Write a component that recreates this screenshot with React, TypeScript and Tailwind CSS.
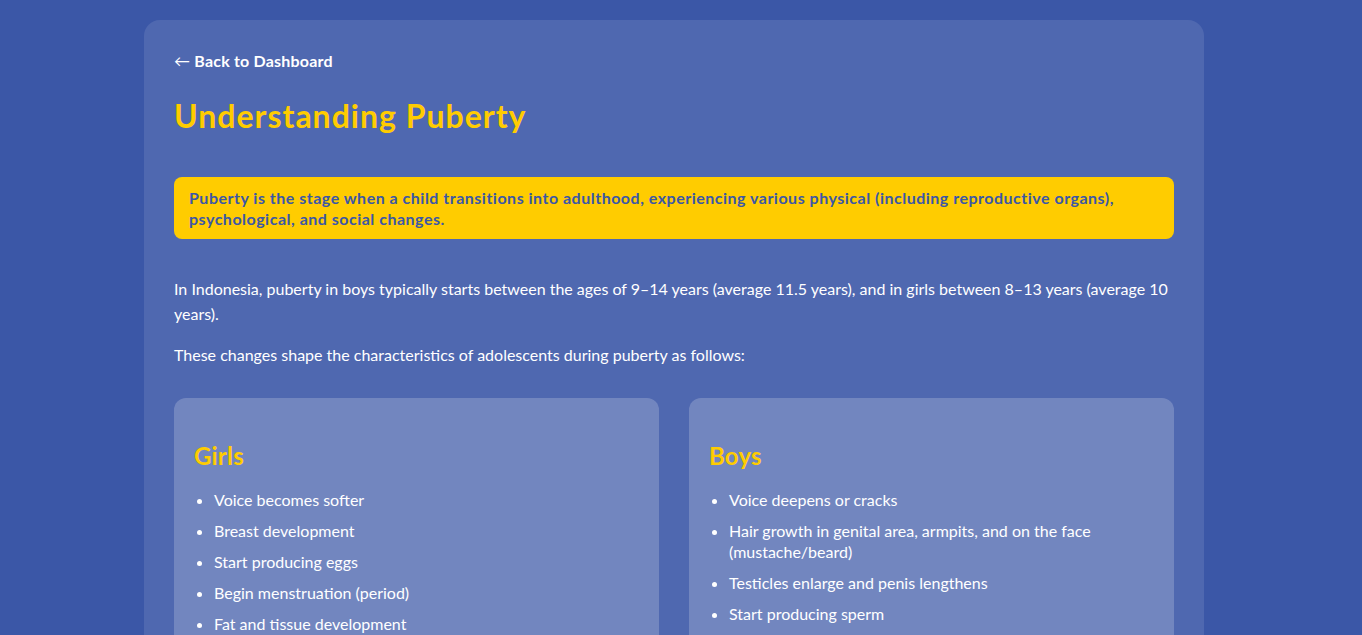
import React from 'react';

const girls = [
  'Voice becomes softer',
  'Breast development',
  'Start producing eggs',
  'Begin menstruation (period)',
  'Fat and tissue development',
  'Hips widen',
  'Hair growth in genital area and armpits',
];

const boys = [
  'Voice deepens or cracks',
  'Hair growth in genital area, armpits, and on the face (mustache/beard)',
  'Testicles enlarge and penis lengthens',
  'Start producing sperm',
  'Wet dreams',
  'Shoulders and chest widen',
];

const TraitCard: React.FC<{ title: string; items: string[] }> = ({ title, items }) => (
  <div className="rounded-xl bg-white/20 px-5 pt-[42px] pb-6">
    <h3 className="mb-[17px] text-2xl font-bold leading-[32px] tracking-[0.2px] text-[#ffcc00]">{title}</h3>
    <ul className="list-disc space-y-[10px] pl-5 text-base leading-[21px] text-white marker:text-white">
      {items.map((item) => (
        <li key={item}>{item}</li>
      ))}
    </ul>
  </div>
);

const App: React.FC = () => {
  return (
    <div className="min-h-screen bg-[#3b57a7] pr-[15px] font-['Lato','Noto_Sans',sans-serif]">
      <div className="p-5 pl-[21px]">
        <div className="mx-auto max-w-[1060px] rounded-2xl bg-white/10 px-[30px] pt-[30px] pb-10">
          <a href="#" className="block text-base font-bold leading-[22px] tracking-[0.2px] text-white">
            <span className="font-normal">←</span> Back to Dashboard
          </a>

          <h1 className="mt-6 text-[32px] font-bold leading-[40px] tracking-[1px] text-[#ffcc00]">
            Understanding Puberty
          </h1>

          <div className="mt-[41px] rounded-lg bg-[#ffcc00] px-[15px] py-[10px] text-base font-bold leading-[21px] tracking-[0.5px] text-[#3b57a7]">
            Puberty is the stage when a child transitions into adulthood, experiencing various physical (including
            reproductive organs), psychological, and social changes.
          </div>

          <p className="mt-[37px] text-base leading-[25px] text-white">
            In Indonesia, puberty in boys typically starts between the ages of 9–14 years (average 11.5 years), and in
            girls between 8–13 years (average 10 years).
          </p>
          <p className="mt-4 text-base leading-[25px] text-white">
            These changes shape the characteristics of adolescents during puberty as follows:
          </p>

          <div className="mt-[31px] grid grid-cols-2 gap-[30px]">
            <TraitCard title="Girls" items={girls} />
            <TraitCard title="Boys" items={boys} />
          </div>
        </div>
      </div>
    </div>
  );
};

export default App;
